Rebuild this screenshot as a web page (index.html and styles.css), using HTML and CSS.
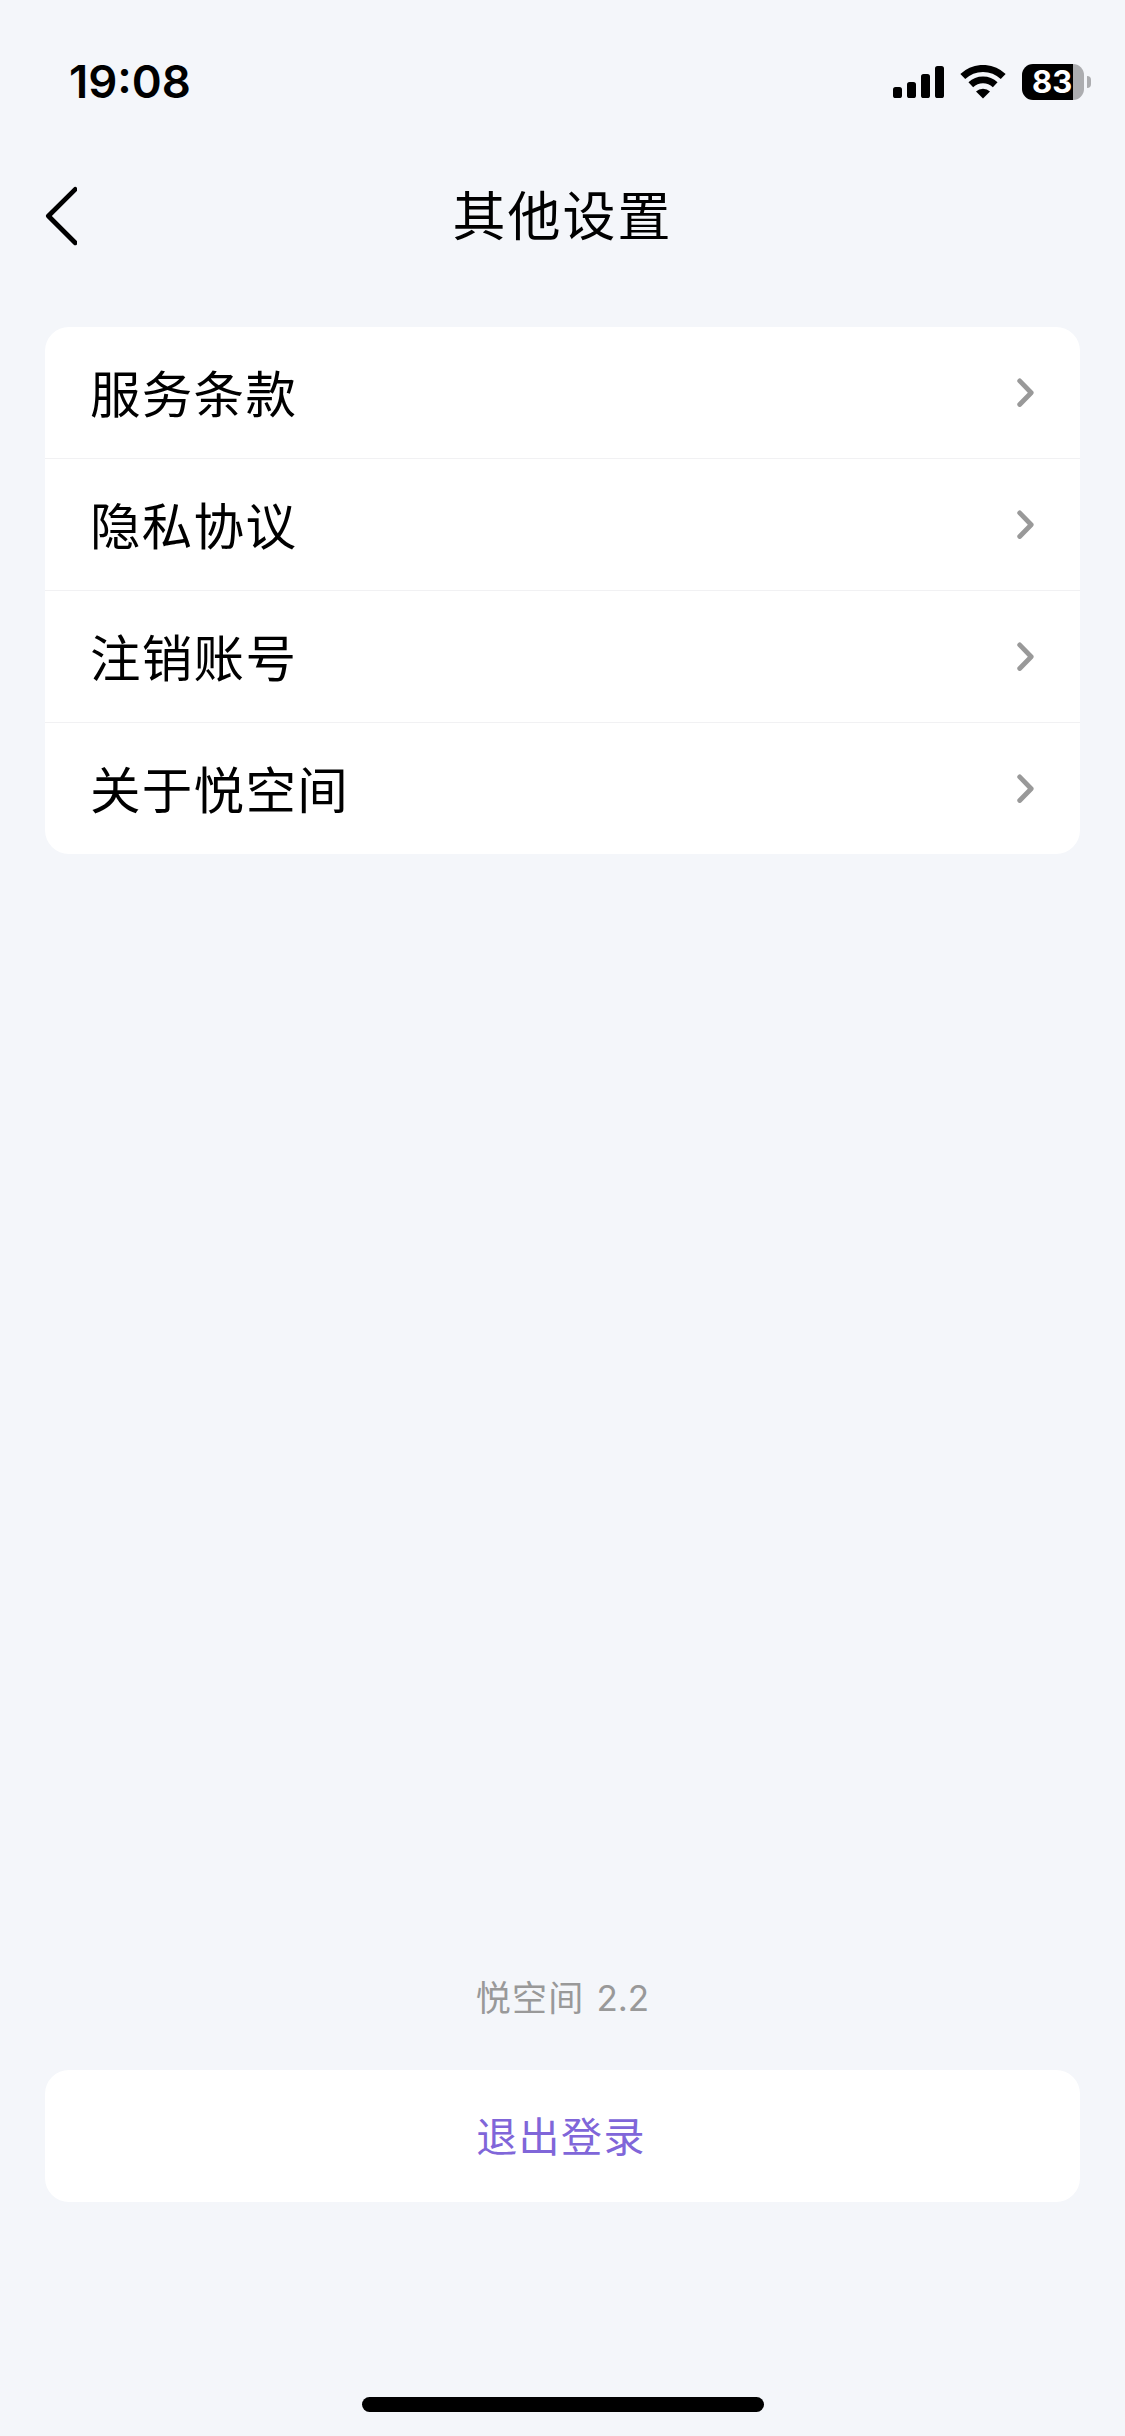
FILE: index.html
```
<!DOCTYPE html>
<html lang="zh-CN">
<head>
    <meta charset="UTF-8">
    <meta name="viewport" content="width=device-width, initial-scale=1.0">
    <title>其他设置</title>
    <link rel="stylesheet" href="styles.css">
</head>
<body>
    <div class="status-bar">
        <span class="time">19:08</span>
        <div class="status-icons">
            <svg class="signal" width="51" height="32" viewBox="0 0 51 32">
                <rect x="0" y="21" width="9" height="11" rx="2.6"/>
                <rect x="14" y="16" width="9" height="16" rx="2.6"/>
                <rect x="28" y="8" width="9" height="24" rx="2.6"/>
                <rect x="42" y="0" width="9" height="32" rx="2.6"/>
            </svg>
            <svg class="wifi" width="46" height="34" viewBox="0 0 46 34">
                <path d="M2.8 11.6a29 29 0 0 1 40.4 0" fill="none" stroke="#000" stroke-width="7"/>
                <path d="M10.8 19.8a17.6 17.6 0 0 1 24.4 0" fill="none" stroke="#000" stroke-width="6.8"/>
                <path d="M23 33.5l-7-6.9a9.8 9.8 0 0 1 14 0z"/>
            </svg>
            <div class="battery"><span>83</span></div>
            <div class="battery-cap"></div>
        </div>
    </div>

    <div class="nav-bar">
        <svg class="back" width="32" height="60" viewBox="0 0 32 60">
            <path d="M30.2 3.4L3.4 30L30.2 56.8"/>
        </svg>
        <h1>其他设置</h1>
    </div>

    <ul class="menu">
        <li>
            <span>服务条款</span>
            <svg class="arrow" width="17" height="29" viewBox="0 0 17 29"><path d="M2.7 2.9L14.2 14.7L2.7 26.5"/></svg>
        </li>
        <li>
            <span>隐私协议</span>
            <svg class="arrow" width="17" height="29" viewBox="0 0 17 29"><path d="M2.7 2.9L14.2 14.7L2.7 26.5"/></svg>
        </li>
        <li>
            <span>注销账号</span>
            <svg class="arrow" width="17" height="29" viewBox="0 0 17 29"><path d="M2.7 2.9L14.2 14.7L2.7 26.5"/></svg>
        </li>
        <li>
            <span>关于悦空间</span>
            <svg class="arrow" width="17" height="29" viewBox="0 0 17 29"><path d="M2.7 2.9L14.2 14.7L2.7 26.5"/></svg>
        </li>
    </ul>

    <div class="footer">
        <p class="version">悦空间 <span>2.2</span></p>
        <button class="logout-button">退出登录</button>
        <div class="home-indicator"></div>
    </div>
</body>
</html>
```

FILE: styles.css
```
* {
    box-sizing: border-box;
}

body {
    font-family: "Noto Sans CJK SC", sans-serif;
    background-color: #f4f6fa;
    color: #000;
    margin: 0;
    height: 2436px;
    display: flex;
    flex-direction: column;
    overflow: hidden;
}

.status-bar {
    height: 132px;
    padding: 32px 34px 0 69px;
    display: flex;
    justify-content: space-between;
    align-items: flex-start;
}

.time {
    font-family: Inter, sans-serif;
    font-size: 45.5px;
    font-weight: 600;
    line-height: 100px;
}

.status-icons {
    height: 100px;
    display: flex;
    align-items: center;
}

.wifi {
    margin-left: 16px;
}

.battery {
    width: 62px;
    height: 36px;
    margin-left: 16px;
    padding-left: 10px;
    border-radius: 11px;
    background: linear-gradient(to right, #000 51px, #acadb0 51px);
    color: #fff;
    font-family: Inter, sans-serif;
    font-size: 31px;
    font-weight: 700;
    line-height: 36px;
}

.battery-cap {
    width: 4px;
    height: 12px;
    margin-left: 3px;
    border-radius: 0 4px 4px 0;
    background-color: #acadb0;
}

.nav-bar {
    height: 168px;
    padding: 0 45px;
    display: flex;
    align-items: center;
}

.back {
    fill: none;
    stroke: #000;
    stroke-width: 4.8;
    stroke-linecap: round;
    stroke-linejoin: round;
}

.nav-bar h1 {
    flex: 1;
    margin: 0 32px 0 0;
    padding-bottom: 6px;
    font-size: 53px;
    font-weight: 400;
    letter-spacing: 2px;
    line-height: 80px;
    text-align: center;
}

.menu {
    list-style-type: none;
    margin: 27px 45px 0;
    padding: 0;
    background-color: #fff;
    border-radius: 24px;
}

.menu li {
    height: 132px;
    padding: 0 46px 0 45px;
    display: flex;
    justify-content: space-between;
    align-items: center;
    border-bottom: 1px solid #f1f1f3;
    font-size: 50.5px;
    letter-spacing: 1.3px;
}

.menu li:last-child {
    height: 131px;
    border-bottom: none;
}

.menu span {
    padding-bottom: 4px;
}

.arrow {
    fill: none;
    stroke: #999;
    stroke-width: 4.8;
    stroke-linecap: round;
    stroke-linejoin: round;
}

.footer {
    margin-top: auto;
    padding: 0 45px 24px;
    display: flex;
    flex-direction: column;
    align-items: center;
}

.version {
    margin: 0 0 45px;
    color: #999;
    font-size: 35px;
    letter-spacing: 1.2px;
    line-height: 54px;
}

.version span {
    margin-left: 3px;
    font-family: Inter, sans-serif;
    letter-spacing: 0;
}

.logout-button {
    width: 100%;
    height: 132px;
    padding: 0 3px 5px 0;
    border: none;
    border-radius: 24px;
    background-color: #fff;
    color: #8066d9;
    font-family: inherit;
    font-size: 41px;
    letter-spacing: 1.4px;
}

.home-indicator {
    width: 402px;
    height: 15px;
    margin-top: 195px;
    border-radius: 8px;
    background-color: #000;
}
```
